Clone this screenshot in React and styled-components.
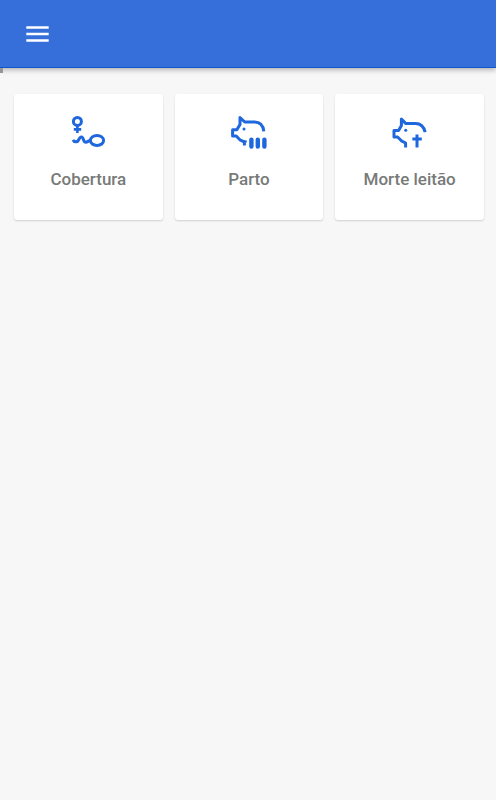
import React from "react";
import styled, { createGlobalStyle } from "styled-components";

const GlobalStyle = createGlobalStyle`
  * {
    box-sizing: border-box;
  }
  body {
    margin: 0;
    background-color: #f7f7f7;
    font-family: Roboto, sans-serif;
  }
`;

const Header = styled.header`
  display: flex;
  align-items: center;
  height: 68px;
  padding: 0 20px;
  background-color: #366fd9;
  border-bottom: 1px solid #1257c9;
  box-shadow: 0 2px 5px rgba(0, 0, 0, 0.28);
`;

const MenuButton = styled.button`
  display: flex;
  padding: 0;
  border: none;
  background: none;
  cursor: pointer;
`;

const Progress = styled.div`
  position: relative;
  width: 3px;
  height: 5px;
  background-color: #969696;
`;

const Grid = styled.main`
  display: grid;
  grid-template-columns: repeat(3, 1fr);
  gap: 12px;
  padding: 21px 12px 12px 14px;
`;

const Card = styled.button`
  display: flex;
  flex-direction: column;
  align-items: center;
  gap: 16px;
  padding: 18px 8px 30px;
  border: none;
  border-radius: 3px;
  background-color: #ffffff;
  box-shadow: 0 1px 2px rgba(0, 0, 0, 0.16);
  color: #777a78;
  font-family: inherit;
  font-size: 17px;
  font-weight: 500;
  line-height: 22px;
  cursor: pointer;
`;

const Icon = styled.svg`
  width: 40px;
  height: 40px;
  fill: none;
  stroke: #1f67dd;
  stroke-width: 3;
  stroke-linejoin: round;
`;

const Eye = styled.circle`
  fill: #1f67dd;
  stroke: none;
`;

const MatingIcon = () => (
  <Icon viewBox="0 0 40 40" aria-hidden="true">
    <circle cx="9.4" cy="9.4" r="4" />
    <path d="M9.4 13.4v7.6M5.8 17.4h7.4" strokeWidth="2.6" />
    <path d="M5 27.8C6.2 30.4 9.4 30.6 10.6 28C11.6 25.8 12 25 13.4 25C16 25 14.8 30.2 17.8 30.2C19.6 30.2 20.4 28.6 22.4 28.5" />
    <ellipse cx="29" cy="28.4" rx="6.6" ry="5" />
  </Icon>
);

const BirthIcon = () => (
  <Icon viewBox="0 0 40 40" aria-hidden="true">
    <path d="M34.8 19.4C34.2 13.2 30.6 10 25.4 10H15.8L11 5.6V12.4L7.8 17.8H3.6V24H7.2L11.4 28.2L15.4 29.8V33.4" />
    <path d="M12.8 29.4H17.8" strokeWidth="2" />
    <Eye cx="15" cy="17" r="1.5" />
    <path d="M22.4 27.6v7M28.8 27.6v7M35.4 27.6v7" strokeWidth="4.4" strokeLinecap="round" />
  </Icon>
);

const DeathIcon = () => (
  <Icon viewBox="0 0 40 40" aria-hidden="true">
    <path d="M35.2 20.2C34 14.8 30.6 11.4 25.4 11.4H15.6L11.4 7V13.6L8.6 18.6H4V25H7.6L11.4 28.8L15.6 31V35.4" />
    <Eye cx="15.7" cy="18.3" r="1.5" />
    <path d="M27 22.6v12.8M22.4 27h9.4" />
  </Icon>
);

const actions = [
  { id: 1, title: "Cobertura", Drawing: MatingIcon },
  { id: 2, title: "Parto", Drawing: BirthIcon },
  { id: 3, title: "Morte leitão", Drawing: DeathIcon },
];

export default function App() {
  return (
    <>
      <GlobalStyle />
      <Header>
        <MenuButton type="button" aria-label="Menu">
          <svg width="36" height="36" viewBox="0 0 36 36" aria-hidden="true">
            <path
              d="M6.3 11.5h22.4M6.3 18h22.4M6.3 24.5h22.4"
              stroke="#ffffff"
              strokeWidth="2.4"
            />
          </svg>
        </MenuButton>
      </Header>
      <Progress />
      <Grid>
        {actions.map(({ id, title, Drawing }) => (
          <Card key={id} type="button">
            <Drawing />
            <span>{title}</span>
          </Card>
        ))}
      </Grid>
    </>
  );
}
